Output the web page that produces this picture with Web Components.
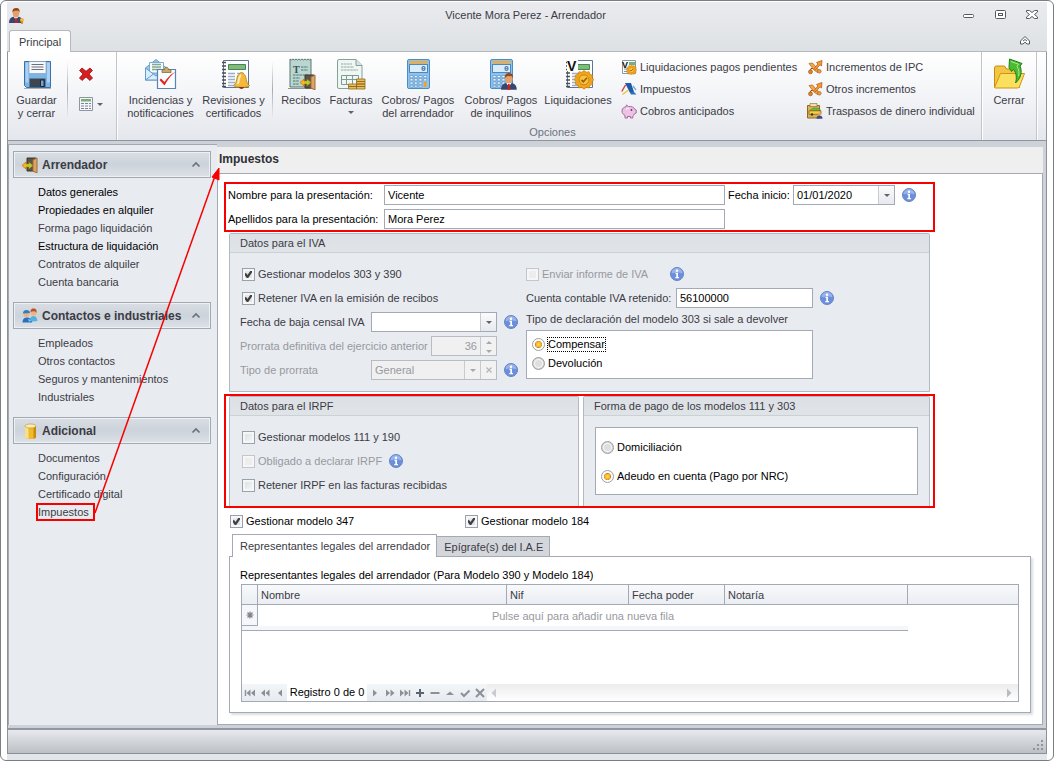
<!DOCTYPE html>
<html lang="es">
<head>
<meta charset="utf-8">
<title>Vicente Mora Perez - Arrendador</title>
<style>
  html, body { margin: 0; }
  body {
    --line: #a3a9b5;
    --ink: #3b3b45;
    --mark: #f80000;
    background: #fff;
    color: var(--ink);
    font: 11px/14px "Liberation Sans", Arial, sans-serif;
  }
</style>
</head>
<body>
<app-window caption="Vicente Mora Perez - Arrendador" tab="Principal">
  <ribbon-bar slot="ribbon"></ribbon-bar>
  <side-nav slot="side"></side-nav>
  <tax-form></tax-form>
</app-window>

<script>
const BASE = `<style>
*,*::before,*::after{box-sizing:border-box}
:host{display:block;box-sizing:border-box}
:host([hidden]){display:none}
button,input,select{font:inherit;color:inherit;margin:0;border-radius:0}
button{background:none;border:0;padding:0}
</style>`;

function define(name, markup, setup) {
  const template = document.createElement('template');
  customElements.define(name, class extends HTMLElement {
    constructor() {
      super();
      template.innerHTML = BASE + (typeof markup === 'function' ? markup(this) : markup);
      this.attachShadow({ mode: 'open' }).append(template.content.cloneNode(true));
      if (setup) setup(this, this.shadowRoot);
    }
  });
}

/* ---------- icon set ---------- */
const person = (x, y, s) => `<g transform="translate(${x} ${y}) scale(${s})">
  <path d="M0 16c0-4 2-6 5-6.500h5c3 .5 5 2.500 5 6.500z" fill="#39476f"/>
  <path d="M5 9.500 7.500 13 10 9.500z" fill="#fff"/><path d="M6.800 10.500h1.500l.7 5.500H6.200z" fill="#cf2020"/>
  <ellipse cx="7.500" cy="5.500" rx="3.600" ry="4.500" fill="#e5a06c"/><path d="M3.700 5C3.300 1.500 5 0 7.600 0s4.300 1.500 3.800 5c-.5-1.500-1-2-2-2.200-2 .6-4.500-.3-5.700 2.200z" fill="#8f4a20"/></g>`;
const door = `<path d="M5 1h9v13H5z" fill="#5a554b" stroke="#3a3630"/><path d="m11 3 4-2v15l-4-2z" fill="#d9a66a" stroke="#a56d33"/><path d="M0 8.500 4 5v2h3V5l4 3.500L7 12v-2H4v2z" fill="#ffb21a" stroke="#b56a00" stroke-width=".6"/><path d="M5.500 7.300h2V6L10 8.500 7.500 11V9.700h-2z" fill="#8fdc3c"/>`;
const calc = `<rect x="5.500" y="1.500" width="22" height="29" rx="1.500" fill="#8fc3ee" stroke="#4a8cc7"/><rect x="7.500" y="3" width="18" height="2.500" fill="#f3a93b"/><rect x="7.500" y="6.500" width="18" height="8" fill="#d8ecfb" stroke="#4d88bb"/><text x="19" y="13" font-size="8" font-family="Liberation Mono" font-weight="bold" fill="#3d6c9c">0</text>
  <g fill="#fdfeff" stroke="#5a93c6" stroke-width=".7"><path d="M8 17.500h3v2.200H8zM12.300 17.500h3v2.200h-3zM17 17.500h3v2.200h-3zM21.700 17.500h3v2.200h-3zM8 20.700h3v2.200H8zM12.300 20.700h3v2.200h-3zM17 20.700h3v2.200h-3zM21.700 20.700h3v2.200h-3zM8 24h3v2.200H8zM12.300 24h3v2.200h-3zM17 24h3v2.200h-3zM8 27.200h3v1.800H8zM12.300 27.200h3v1.800h-3zM17 27.200h3v1.800h-3z"/></g><path d="M21.700 24h3v5h-3z" fill="#f3a32c"/>`;
const seal = (x, y, s) => `<g transform="translate(${x} ${y}) scale(${s})"><path d="m0-10 2.600 2 3.300-.6 1.200 3.100 3.100 1.200L9.600-1l2 1.600-2 2.600.6 3-3.100 1.200-1.200 3.100-3.300-.6L0 12l-2.600-2.100-3.300.6-1.200-3.100-3.100-1.200.6-3-2-2.600 2-2.600-.6-2.300 3.100-1.200 1.200-3.100 3.300.6z" fill="#efa51d" stroke="#c67a0a" stroke-width=".8"/><circle cy="1" r="5.800" fill="#f8c340" stroke="#c67a0a"/><path d="M-3 1-.8 3.300 3.500-1.500" fill="none" stroke="#9b5e05" stroke-width="2"/></g>`;
const notebook = `<path d="M5.500 2.500h25v27h-25z" fill="#fdfefe" stroke="#5d7596"/><path d="M4 4.500h4M4 8h4M4 11.500h4M4 15h4M4 18.500h4M4 22h4M4 25.500h4M4 28.500h4" stroke="#4c4f55" stroke-width="1.300"/><path d="M10.500 6.500h17v5h-17z" fill="#7cbd7c" stroke="#4b8450"/><path d="M10 15.500h7m2 0h7m-16 3h7m2 0h7m-16 3h7m2 0h7m-16 3h7m-7 3h7" stroke="#9badcb" stroke-width="1.300"/>`;
const chart = `<path d="m2.500 13.500 1.500-4h3l1.500-2.500" fill="none" stroke="#7a4a22" stroke-width="1"/><path d="m2 4.500 3.500-.5 6.500 7.500-1.500 2L7 11z" fill="#f6a548" stroke="#b8691d" stroke-width=".8"/><path d="M7 9.500 11 5l-1.500-1.500L15 1.500l-.5 5.500L13 5.800 8.500 11z" fill="#f59a35" stroke="#b8601a" stroke-width=".8"/><circle cx="3.500" cy="12.800" r="2" fill="#e58423" stroke="#8d4d18" stroke-width=".6"/><circle cx="12.300" cy="12.300" r="1.800" fill="#efa04a" stroke="#8d4d18" stroke-width=".6"/>`;

const ICONS = {
  owner: [16, person(0, 0, .93) + '<circle cx="13" cy="12" r="2" fill="#f1b83a"/><path d="M12 13v3h2v-3z" fill="#d8951d"/>'],
  save: [32, '<path d="M3.500 3.500h26v26h-24l-2-2z" fill="#7ab5e8" stroke="#3b6fa8"/><path d="M4.500 4.500h3v20h-3zM26 4.500h3v20h-3z" fill="#a9d2f4"/><path d="M8 3.500h17v12H8z" fill="#f6f8fa" stroke="#8097ae" stroke-width=".6"/><path d="M10.500 6.500h12M10.500 9h12M10.500 11.500h12" stroke="#67707b"/><path d="M8.500 20.500h16v8.500h-16z" fill="#3f4650"/><path d="M19.500 22H23v6.500h-3.500z" fill="#6fa4dd" stroke="#20252d"/><path d="M3 30.500h27" stroke="#a9afb7"/>'],
  remove: [16, '<path d="m1.500 4.500 2.500-2.500L8 5.300 12 2l2.500 2.500L11 8l3.500 4-2.500 2.500L8 10.900 4 14.500 1.500 12 5 8z" fill="#d81e1e" stroke="#971010" stroke-width=".8"/>'],
  list: [16, '<path d="M1.500 1.500h13v13h-13z" fill="#f4f6f7" stroke="#8f979e"/><path d="M3 3h10v2.500H3z" fill="#79b07a"/><path d="M3 7.500h3m1 0h3m1 0h2m-10 2.500h3m1 0h3m1 0h2m-10 2.500h3m1 0h3m1 0h2" stroke="#7486a3"/>'],
  incidents: [32, '<path d="M.5 10 11 1.500 21.500 10v12H.5z" fill="#9cc7e8" stroke="#5f9ccb"/><path d="M4.500 4.500h14V15h-14z" fill="#f7fafc" stroke="#7babce"/><path d="M7 6.500h9M7 9h9M7 11.500h9" stroke="#84a98d" stroke-width="1.400"/><path d="m.5 10 10.500 8 10.500-8v12H.5z" fill="#d9edfa" stroke="#5f9ccb"/><path d="m.5 22 8-6" stroke="#5f9ccb"/><path d="M12.500 11.500h18v19h-18z" fill="#fafcff" stroke="#5b83b5" stroke-width="1.200"/><path d="M17 14.500v-3h2.500c0-3 4-3 4 0H26v3z" fill="#c6a86a" stroke="#7a6233" stroke-width=".7"/><path d="m14.500 22 5 5.500C23 21.500 26 17 31 13.500c-6 3-8.500 6.500-11.500 10.500L16 20.500z" fill="#e3261d"/>'],
  reviews: [32, notebook + '<path d="M15.500 27.500c4.500-3 2-9.500 6-11.500.5-1 1-1.500 2-1.500s1.500.5 2 1.500c4 2 1.500 8.500 6 11.500-.5 2.500-15.500 2.500-16 0z" fill="#f4b93a" stroke="#b97b0c" stroke-width=".8"/><path d="M19.500 26c2-2.500.8-7.500 3.500-9" stroke="#fdf0b8" stroke-width="2" fill="none"/><path d="M21 29h5c0 2.500-5 2.500-5 0z" fill="#8b2f1c"/>'],
  receipts: [32, '<path d="m5 1 1.500 1L8 1l1.500 1L11 1l1.500 1L14 1l1.500 1L17 1l1.500 1L20 1l1.500 1L23 1l1.500 1L26 1v28H5z" fill="#b9d6d0" stroke="#5b7672"/><text x="8" y="15" font-size="10" font-weight="bold" font-family="Liberation Serif" fill="#35524e">T</text><path d="M16 9h7m-7 3h7m-15 5h15m-15 3h7m-7 3h6m-6 3h6" stroke="#54736e" stroke-dasharray="2.500 .7"/><path d="M3 30.500h25" stroke="#8a9490"/><g transform="translate(15 16)">' + door + '</g>'],
  invoices: [32, '<path d="M2.500 3q0-1.500 1.500-1.500h17l6 6V29q0 1.500-1.500 1.500H4q-1.500 0-1.500-1.500z" fill="#f0f6f3" stroke="#86a199"/><path d="M21 1.500v6h6" fill="#d5e4de" stroke="#86a199"/><path d="M6 6h11M6 9h13M6 12h17" stroke="#8eaaa2" stroke-dasharray="2.500 .6"/><path d="M6.500 17.500h17v9h-17zM11.500 17.500v9m6-9v9m-11-5h17" fill="none" stroke="#7e9b93"/><g fill="#e6bc5c" stroke="#93691a" stroke-width=".8"><path d="M13.500 28.500h8V31h-8zM13.500 26h8v2.500h-8zM21.500 28.500H30V31h-8.500zM21.500 26H30v2.500h-8.500zM21.500 23.500H30V26h-8.500zM21.500 21H30v2.500h-8.500z"/></g>'],
  calc: [32, calc],
  calcPerson: [32, calc + person(16, 15, 1.050)],
  settle: [32, notebook + '<path d="M5 1h11v12H5z" fill="#fff"/><text x="5" y="13" font-size="14" font-weight="bold" font-family="Liberation Sans" fill="#111">V</text>' + seal(22, 21, .85)],
  settleSmall: [16, '<path d="M1.500 1.500h13v13h-13z" fill="#fbfcfd" stroke="#8d97a3"/><path d="M8 3h6v3H8z" fill="#79b07a"/><path d="M3 10h4m-4 2.500h4" stroke="#8295b2"/><text x="1" y="9" font-size="9" font-weight="bold" font-family="Liberation Sans" fill="#111">V</text>' + seal(10.500, 10.500, .46)],
  tax: [16, '<path d="M4 2h6l3 9H8.500z" fill="#215ba8"/><path d="M8.500 11H13l2.500 2.500H10z" fill="#2f70bd"/><path d="M.8 10.500 4.500 4" stroke="#d8433a" stroke-width="1.500"/><path d="m1.500 13.500 6-4.500" stroke="#e6c83a" stroke-width="1.500"/><path d="m12 5 3 4" stroke="#6fa8dc" stroke-width="1.300"/>'],
  piggy: [16, '<path d="M1 8c0-3 2.500-4 4-4.200L5.500 2l2 1.500c3-.3 5.500.8 6.200 2.700l1.500.8v3l-1.700.8c-.4 1-1 1.700-1.700 2.200v2H9.500v-1.500h-3V15H4v-2.500C2 11.500 1 10 1 8z" fill="#ecc3e3" stroke="#a56a9d"/><circle cx="10.500" cy="7" r=".9" fill="#6c3264"/><path d="M5 6.500c.8-1 2-1.200 3-1" stroke="#fff" fill="none"/>'],
  chart: [16, chart],
  transfer: [16, '<path d="M.5 2.500h12V15H.5z" fill="#d8b25a" stroke="#8c6a22"/><path d="M3 .5h7v3H3z" fill="#efe0a8" stroke="#8c6a22" stroke-width=".6"/><path d="M3 7.500 6 5h5l3 2.500z" fill="#6fb64a" stroke="#41802a" stroke-width=".5"/><path d="M2 7.800h12v3.500H2z" fill="#f5cf3f" stroke="#7b5a17" stroke-width=".7"/><circle cx="5" cy="11.500" r="1.200" fill="#333"/><path d="M9.500 15.800c0-2.500 1-3.300 3-3.300s3 .8 3 3.300z" fill="#3f4a86"/><circle cx="12.500" cy="11" r="1.600" fill="#e5a06c"/>'],
  folder: [32, '<path d="M1.500 29.500V10q0-2 2-2h8l2 3h11q2 0 2 2v16.500z" fill="#f3c544" stroke="#c98b0d"/><path d="m1.500 29.500 6-14h24l-5 13q-.4 1.500-2 1.500H3q-1.500 0-1.500-.5z" fill="#fbe060" stroke="#cf950f"/><path d="M16 9.500 16.500 1 29 5.500l-2 2.500c2.500 6 1 12-4.500 17 1.500-5 1-10-2-13.500l-2 2z" fill="#4dbb32" stroke="#1f8013"/><path d="m18 3.500 7.500 2.700-1.500 2c2 3.500 2.500 7 1.500 10" fill="none" stroke="#a9ea8d"/>'],
  landlord: [16, door],
  contacts: [16, '<circle cx="11.500" cy="4.500" r="3" fill="#f0b27f"/><path d="M8.500 4c0-3 1.500-3.500 3.500-3.500S15 2 14.500 5c-1-2-3-2-6-1z" fill="#b0552a"/><path d="M7.500 14c0-4 2-6 4-6s4 2 4 5z" fill="#58b1dd"/><circle cx="4.500" cy="6" r="3" fill="#f0b27f"/><path d="M1 5.500C1 3 2.500 2 4.500 2S8 3 8 5z" fill="#2a7fc6"/><path d="M.5 14.500C.5 11 2 9.500 5 9.500s4.500 2 5 5z" fill="#2871bd"/><path d="m6 11 4 1-3 2z" fill="#7cc6ee"/>'],
  barrel: [16, '<path d="M3 3h11v11c0 1.500-2.500 2-5.500 2S3 15.500 3 14z" fill="#efbb2c"/><path d="M3 3h3.500v12.800C4.500 15.500 3 15 3 14z" fill="#f8e08a"/><path d="M11.500 3H14v11c0 .8-1 1.400-2.500 1.700z" fill="#c98a15"/><ellipse cx="8.500" cy="3" rx="5.500" ry="2" fill="#fbeeb4" stroke="#c08a1c" stroke-width=".6"/>'],
  info: [14, '<circle cx="7" cy="7" r="6.500" fill="#6c8fdb" stroke="#6485c6"/><path d="M1.500 6.500a5.500 5.500 0 0 1 11 0C10 5 5 5 1.500 6.500z" fill="#98b3ea"/><circle cx="7" cy="3.700" r="1.200" fill="#fff"/><path d="M5.500 5.700H8v4.300h1v1.200H5.300V10h1V6.900h-.8z" fill="#fff"/>'],
  chevron: [16, '<path d="M4.500 9.500 8 6l3.500 3.500" fill="none" stroke="#6d7078" stroke-width="1.600"/>'],
  collapse: [16, '<path d="M3.500 8 8 3.500 12.500 8v3H10L8 9.200 6 11H3.500V8zM6 8l2-1.500L10 8" fill="#fff" stroke="#55585f"/>'],
  minimize: [16, '<rect x="3.500" y="6.500" width="10" height="3" rx="1" fill="#fff" stroke="#55585f"/>'],
  maximize: [16, '<rect x="3.500" y="2.500" width="10" height="8" rx="1" fill="#fff" stroke="#55585f"/><rect x="6.500" y="5.500" width="4" height="2" fill="none" stroke="#55585f"/>'],
  close: [16, '<path d="M2.500 2.500h3l2.500 2 2.500-2h3V4L10.500 6.500l3 2.500v1.500h-3L8 8.500l-2.500 2h-3V9l3-2.500-3-2.500z" fill="#fff" stroke="#55585f"/>'],
  down: [8, '<path d="M1 3h6L4 6z" fill="#5f636c"/>'],
  up: [8, '<path d="M1 6h6L4 3z" fill="#a8a8a8"/>'],
  downOff: [8, '<path d="M1 3h6L4 6z" fill="#a8a8a8"/>'],
  cross: [8, '<path d="m1.500 1.500 5 5m0-5-5 5" stroke="#b4b4b4" stroke-width="1.200"/>'],
  newRow: [10, '<path d="M5 1.500v7M1.500 5h7M2.500 2.500l5 5M7.500 2.500l-5 5" stroke="#7d828b" stroke-width="1.200"/>'],
  first: [12, '<path d="M1.500 3v6" stroke="#8d9097" stroke-width="1.400"/><path d="M6.500 2.500v7L2.500 6zM11 2.500v7L7 6z" fill="#8d9097"/>'],
  prevPage: [12, '<path d="M6 2.500v7L2 6zM10.500 2.500v7L6.500 6z" fill="#8d9097"/>'],
  prev: [12, '<path d="M8 2.500v7L4 6z" fill="#8d9097"/>'],
  next: [12, '<path d="M4 2.500v7L8 6z" fill="#8d9097"/>'],
  nextPage: [12, '<path d="M2 2.500v7L6 6zM6.500 2.500v7l4-3.500z" fill="#8d9097"/>'],
  last: [12, '<path d="M10.500 3v6" stroke="#8d9097" stroke-width="1.400"/><path d="M1 2.500v7L5 6zM5.500 2.500v7l4-3.500z" fill="#8d9097"/>'],
  plus: [12, '<path d="M6 2v8M2 6h8" stroke="#5c6370" stroke-width="2"/>'],
  minus: [12, '<path d="M1.500 6h9" stroke="#8d9097" stroke-width="2"/>'],
  edit: [12, '<path d="M2 8h8L6 4.500z" fill="#8d9097"/>'],
  accept: [12, '<path d="m2 6 3 3 5.500-5.500" fill="none" stroke="#8d9097" stroke-width="2"/>'],
  cancel: [12, '<path d="m2 2 8 8m0-8-8 8" stroke="#8d9097" stroke-width="2"/>'],
  scrollLeft: [12, '<path d="M8 1.500v9L3.500 6z" fill="#c9cbce"/>'],
  scrollRight: [12, '<path d="M4 1.500v9L8.500 6z" fill="#b9bbbf"/>'],
  grip: [12, '<g fill="#8f959d"><path d="M9 1h2v2H9zM9 5h2v2H9zM5 5h2v2H5zM9 9h2v2H9zM5 9h2v2H5zM1 9h2v2H1z"/></g>']
};
const icon = name => `<ui-icon name="${name}"></ui-icon>`;

define('ui-icon', host => {
  const [size, art] = ICONS[host.getAttribute('name')];
  return `<style>:host{display:inline-block;flex:none;width:${size}px;height:${size}px}svg{display:block}</style>
  <svg width="${size}" height="${size}" viewBox="0 0 ${size} ${size}" aria-hidden="true">${art}</svg>`;
});

/* ---------- form controls ---------- */
define('check-field', host => `<style>
:host{display:inline-flex}
label{display:flex;align-items:center;gap:3px;height:14px;white-space:nowrap}
input{appearance:none;width:13px;height:13px;flex:none;border:1px solid #9ba1ac;background:linear-gradient(135deg,#d9dbde,#fafafa);box-shadow:inset 0 0 0 2px #f5f6f7}
input:checked{background:url('data:image/svg+xml,<svg xmlns="http://www.w3.org/2000/svg" width="11" height="11"><path d="M2 4.500 4.500 8l4.500-6.500" fill="none" stroke="%23404040" stroke-width="2.200"/></svg>') no-repeat,linear-gradient(#ececec,#e0e1e3)}
:host([disabled]){color:#97999e}
:host([disabled]) input{border-color:#c3c6cb;background:#ededed}
</style><label><input type="checkbox" ${host.hasAttribute('checked') ? 'checked' : ''} ${host.hasAttribute('disabled') ? 'disabled' : ''}><slot></slot></label>`);

define('radio-list', host => {
  const options = host.getAttribute('options').split('|');
  const chosen = Number(host.getAttribute('selected'));
  return `<style>
:host{display:flex;flex-direction:column;border:1px solid var(--line);background:#fff;color:#000;padding:0 5px}
label{display:flex;align-items:center;gap:3px;height:14px}
input{appearance:none;width:13px;height:13px;flex:none;border-radius:50%;border:1px solid #9b9da3;background:radial-gradient(#dedede 3px,#f6f6f6 4px,#d6d6d6 5px)}
input:checked{background:radial-gradient(circle at 50% 50%,#ffe14a 0,#f6a81c 3px,#c78017 3px,#fff 4px)}
span{height:13px;line-height:13px}
:host([focused]) input:checked+span{outline:1px dotted #000}
</style>` + options.map((text, i) =>
    `<label><input type="radio" name="choice" ${i === chosen ? 'checked' : ''}><span>${text}</span></label>`).join('');
});

define('text-field', host => {
  const kind = host.getAttribute('kind') || 'text';
  const off = host.hasAttribute('disabled') ? 'disabled' : '';
  const value = host.getAttribute('value') || '';
  const label = host.getAttribute('label');
  let control = kind === 'select'
    ? `<select id="c" ${off}><option>${value}</option></select>`
    : `<input id="c" type="text" value="${value}" ${off}>`;
  if (kind === 'date') control += `<button aria-label="Abrir calendario">${icon('down')}</button>`;
  if (kind === 'select') control += `<button ${off} aria-label="Desplegar">${icon('downOff')}</button><button ${off} aria-label="Borrar">${icon('cross')}</button>`;
  if (kind === 'spin') control += `<div class="spin"><button ${off} aria-label="Subir">${icon('up')}</button><button ${off} aria-label="Bajar">${icon('downOff')}</button></div>`;
  return `<style>
:host{display:flex;align-items:center;height:20px}
label{white-space:nowrap;flex:none;width:var(--label,auto)}
.box{display:flex;flex:1;min-width:0;height:20px;border:1px solid var(--line);background:#fff;color:#000}
input,select{appearance:none;border:0;background:none;flex:1;min-width:0;padding:0 3px;outline:0;height:18px;opacity:1}
button{width:16px;border-left:1px solid #c6cad1;background:linear-gradient(#fafbfc,#e6e9ee);display:flex;align-items:center;justify-content:center}
.spin{display:flex;flex-direction:column}
.spin button{height:9px}
:host([disabled]){color:#97999e}
:host([disabled]) .box{color:#97999e;background:#f0f0f0;border-color:#b7bbc3}
:host([disabled]) button{background:#f2f2f2}
:host([kind=spin]) input{text-align:right;padding-right:3px}
</style><label for="c">${label}</label><div class="box">${control}</div>`;
});

define('group-panel', host => `<style>
:host{display:flex;flex-direction:column;border:1px solid #b3b8c1;border-radius:2px 2px 0 0;background:#e8ebf0}
h3{margin:0;height:19px;padding:0 10px;font:inherit;line-height:18px;background:linear-gradient(#dde0e5,#dfe4e7);border-bottom:1px solid #cdd1d7}
</style><h3>${host.getAttribute('caption')}</h3><slot></slot>`);

/* ---------- window ---------- */
define('app-window', host => `<style>
:host{position:relative;display:flex;flex-direction:column;min-height:100vh;border:1px solid #797d86;border-radius:6px;background:#fff;padding:1px 6px 0}
header{background:linear-gradient(#e9ebee,#dee1e4)}
.title{display:grid;grid-template-columns:100px 1fr 100px;align-items:center;height:28px}
h1{margin:0;font:inherit;line-height:14px;text-align:center;grid-column:2;padding:0 3px 2px 0}
.title>ui-icon{margin-left:2px}
.controls{display:flex;gap:16px;grid-column:3;justify-content:flex-end;padding-right:7px}
.tabs{display:flex;align-items:flex-end;justify-content:space-between;height:22px;border-bottom:1px solid #b4b8be;padding:0 14px 0 2px}
.tabs .tab{height:22px;margin-bottom:-1px;padding:0 9px;border:1px solid #b4b8be;border-bottom:0;border-radius:3px 3px 0 0;background:#fff}
.tabs .fold{align-self:center}
.body{flex:1;display:grid;grid-template-columns:209px minmax(0,1fr);border:solid #8b909a;border-width:0 1px;background:#cdd2d9;padding:3px 3px 3px 0}
.body ::slotted([slot=side]){background:#e8ebf0;border:solid #a3a8b1;border-width:1px 0 0 1px}
footer{height:26px;border:1px solid #8b909a;border-top:2px solid #9397a1;background:linear-gradient(#e7e9ee,#bcc0c5);display:flex;justify-content:flex-end;align-items:flex-end;padding:0 2px 2px}
.rim{height:6px;background:#e2e6e9}
.controls button,.fold{display:flex}
svg.arrow{position:absolute;left:93px;top:166px;pointer-events:none}
</style>
<header><div class="title">${icon('owner')}<h1>${host.getAttribute('caption')}</h1>
<div class="controls"><button aria-label="Minimizar">${icon('minimize')}</button><button aria-label="Maximizar">${icon('maximize')}</button><button aria-label="Cerrar ventana">${icon('close')}</button></div></div>
<div class="tabs"><button class="tab">${host.getAttribute('tab')}</button><button class="fold" aria-label="Contraer cinta">${icon('collapse')}</button></div></header>
<slot name="ribbon"></slot>
<div class="body"><slot name="side"></slot><slot></slot></div>
<footer>${icon('grip')}</footer><div class="rim"></div>
<svg class="arrow" width="130" height="350" aria-hidden="true"><path d="M1 346 121 9" stroke="#f80000" stroke-width="1.500"/><path d="M125 1v12l-7-3z" fill="#f80000" stroke="#f80000"/></svg>`);

/* ---------- ribbon ---------- */
define('ribbon-button', host => `<style>
:host{flex:none;width:var(--w,72px)}
button{display:flex;flex-direction:column;align-items:center;gap:4px;width:100%;line-height:13px;text-align:center;white-space:nowrap}
.menu{height:6px;margin-top:-5px}
</style><button>${icon(host.getAttribute('icon'))}<span><slot></slot></span>${host.hasAttribute('menu') ? `<span class="menu">${icon('down')}</span>` : ''}</button>`);

define('ribbon-link', host => `<style>
button{display:flex;align-items:center;gap:3px;height:16px;white-space:nowrap}
</style><button>${icon(host.getAttribute('icon'))}<slot></slot></button>`);

define('ribbon-bar', `<style>
:host{display:flex;height:89px;background:linear-gradient(#fff,#f3f4f7 50%,#e4e7ec);border:1px solid #9094a0;border-top:0;white-space:nowrap}
.group{display:flex;flex-direction:column;justify-content:space-between;border-right:1px solid #c1c5cb;box-shadow:1px 0 #fff;padding:6px 0 1px}
.row{display:flex;align-items:flex-start}
.sep{width:1px;height:58px;margin:3px 3px 0 2px;background:linear-gradient(#fff0,#a7abb3,#fff0)}
.small{display:flex;flex-direction:column;gap:14px;padding:8px 0 0 7px;width:45px}
.small button{display:flex;align-items:center;gap:2px}
.links{display:flex;flex-direction:column;gap:6px;padding-top:1px}
.links.first{width:193px;padding-left:7px}
.caption{text-align:center;color:#6d7280}
.main{flex:0 1 auto;padding-left:7px;width:865px}
</style>
<div class="group"><div class="row">
<ribbon-button icon="save" style="--w:57px">Guardar<br>y cerrar</ribbon-button><div class="sep"></div>
<div class="small"><button aria-label="Eliminar">${icon('remove')}</button><button aria-label="Vistas">${icon('list')}${icon('down')}</button></div>
</div></div>
<div class="group main"><div class="row">
<ribbon-button icon="incidents" style="--w:73px">Incidencias y<br>notificaciones</ribbon-button>
<ribbon-button icon="reviews" style="--w:73px">Revisiones y<br>certificados</ribbon-button><div class="sep"></div>
<ribbon-button icon="receipts" style="--w:50px">Recibos</ribbon-button>
<ribbon-button icon="invoices" menu style="--w:50px">Facturas</ribbon-button>
<ribbon-button icon="calc" style="--w:84px">Cobros/ Pagos<br>del arrendador</ribbon-button>
<ribbon-button icon="calcPerson" style="--w:82px">Cobros/ Pagos<br>de inquilinos</ribbon-button>
<ribbon-button icon="settle">Liquidaciones</ribbon-button>
<div class="links first">
<ribbon-link icon="settleSmall">Liquidaciones pagos pendientes</ribbon-link><ribbon-link icon="tax">Impuestos</ribbon-link><ribbon-link icon="piggy">Cobros anticipados</ribbon-link></div>
<div class="links"><ribbon-link icon="chart">Incrementos de IPC</ribbon-link><ribbon-link icon="chart">Otros incrementos</ribbon-link><ribbon-link icon="transfer">Traspasos de dinero individual</ribbon-link></div>
</div><div class="caption">Opciones</div></div>
<div class="group"><ribbon-button icon="folder" style="--w:54px">Cerrar</ribbon-button></div>`);

/* ---------- navigation ---------- */
define('nav-group', host => `<style>
:host{margin-bottom:11px}
button{display:flex;align-items:center;gap:4px;width:100%;height:27px;padding:0 6px 0 8px;border:1px solid #a3a9b3;box-shadow:inset 0 0 0 1px #eef1f4;background:linear-gradient(#d9dee4,#ccd3da 50%,#dde1e7);font-size:12px;font-weight:bold;text-align:left;white-space:nowrap}
button span{flex:1}
nav{display:flex;flex-direction:column;padding-top:5px}
</style><button aria-expanded="true">${icon(host.getAttribute('icon'))}<span>${host.getAttribute('caption')}</span>${icon('chevron')}</button><nav><slot></slot></nav>`);

define('nav-link', `<style>
:host{display:flex;height:18px;padding-left:23px;align-items:center}
a{color:inherit;text-decoration:none;border:2px solid transparent;line-height:14px;white-space:nowrap}
:host([strong]){color:#000}
:host([marked]) a{border-color:var(--mark);padding-right:4px}
</style><a href="#"><slot></slot></a>`);

define('side-nav', `<style>:host{padding:6px 6px 0 4px}</style>
<nav-group icon="landlord" caption="Arrendador"><nav-link strong>Datos generales</nav-link><nav-link strong>Propiedades en alquiler</nav-link><nav-link>Forma pago liquidación</nav-link><nav-link strong>Estructura de liquidación</nav-link><nav-link>Contratos de alquiler</nav-link><nav-link>Cuenta bancaria</nav-link></nav-group>
<nav-group icon="contacts" caption="Contactos e industriales"><nav-link>Empleados</nav-link><nav-link>Otros contactos</nav-link><nav-link>Seguros y mantenimientos</nav-link><nav-link>Industriales</nav-link></nav-group>
<nav-group icon="barrel" caption="Adicional"><nav-link>Documentos</nav-link><nav-link>Configuración</nav-link><nav-link>Certificado digital</nav-link><nav-link marked>Impuestos</nav-link></nav-group>`);

/* ---------- representatives grid ---------- */
define('record-grid', `<style>
:host{display:flex;flex-direction:column;border:1px solid var(--line);background:#fff;min-height:118px}
.data{flex:1}
table{border-collapse:separate;border-spacing:0;table-layout:fixed;width:100%}
th{height:20px;padding:0 3px;font-weight:normal;text-align:left;background:linear-gradient(#f8f9fb,#eaedf2);border:solid var(--line);border-width:0 1px 1px 0}
th:last-child{border-right:0}
td{padding:0}
td.mark{border:solid var(--line);border-width:0 1px 1px 0;background:#f5f7fa}
td.mark ui-icon{display:block;margin:0 auto}
td.new{height:21px;text-align:center;color:#97999e}
td.edge{height:5px;background:#f4f6f9;border-bottom:1px solid var(--line)}
.nav{display:flex;align-items:center;height:17px;background:linear-gradient(#f3f6f9,#e7eaee)}
.nav button{width:15px;display:flex;justify-content:center}
.nav output{background:#fff;color:#000;padding:0 2px;line-height:17px;width:80px;white-space:nowrap;text-align:center}
.scroll{flex:1;height:17px;display:flex;align-items:center;justify-content:space-between;background:linear-gradient(#ececec,#fff);padding:0 3px 0 1px}
</style>
<div class="data"><table><colgroup><col style="width:16px"><col style="width:249px"><col style="width:122px"><col style="width:96px"><col style="width:183px"><col></colgroup>
<thead><tr><th></th><th>Nombre</th><th>Nif</th><th>Fecha poder</th><th>Notaría</th><th></th></tr></thead>
<tbody><tr><td class="mark">${icon('newRow')}</td><td class="new" colspan="4">Pulse aquí para añadir una nueva fila</td><td></td></tr>
<tr><td class="edge" colspan="5"></td><td></td></tr></tbody></table></div>
<div class="nav"><button aria-label="Primero">${icon('first')}</button><button aria-label="Página anterior">${icon('prevPage')}</button><button aria-label="Anterior">${icon('prev')}</button><output>Registro 0 de 0</output><button aria-label="Siguiente">${icon('next')}</button><button aria-label="Página siguiente">${icon('nextPage')}</button><button aria-label="Último">${icon('last')}</button><button aria-label="Añadir">${icon('plus')}</button><button aria-label="Quitar">${icon('minus')}</button><button aria-label="Editar">${icon('edit')}</button><button aria-label="Aceptar">${icon('accept')}</button><button aria-label="Cancelar">${icon('cancel')}</button>
<div class="scroll">${icon('scrollLeft')}${icon('scrollRight')}</div></div>`);

/* ---------- tax form ---------- */
define('tax-form', `<style>
:host{display:flex;flex-direction:column;min-width:0;padding-top:3px}
h2{margin:0;height:26px;padding:0 2px;font-size:12px;font-weight:bold;line-height:24px;background:#efefef;color:#303036}
.page{flex:1;display:flex;flex-direction:column;border:1px solid var(--line);background:#fff;padding:8px 11px 11px 6px}
.frame{border:2px solid var(--mark);width:711px;max-width:100%}
.names{display:grid;grid-template-columns:497px auto 16px;gap:4px 3px;padding:1px 0 1px 2px;color:#000;justify-content:start;align-items:center}
.names text-field{--label:156px}
.names .start{--label:65px;width:167px;margin-right:4px}
.iva{margin:1px 0 0 5px;width:701px;min-height:159px}
.cols{display:grid;grid-template-columns:286px 287px 20px;padding:11px 0 10px 10px}
.rows{display:flex;flex-direction:column;gap:4px}
.row{display:flex;align-items:center;gap:7px;height:20px}
.row.check{padding-left:2px}
.rows text-field{width:257px;--label:131px}
.rows .spin{--label:191px}
.right{display:flex;flex-direction:column}
.right text-field{--label:150px;width:287px;margin:4px 0}
.right radio-list{height:49px;padding-top:6px;gap:5px;margin-top:4px}
.side{display:flex;flex-direction:column;padding:27px 0 0 7px}
.right .row{gap:22px}
.pair{display:grid;grid-template-columns:350px 1fr;gap:4px;padding:0 3px;margin-top:2px;height:114px;overflow:hidden}
.pair group-panel{border-bottom:0}
.pair .rows{padding:11px 0 0 10px}
.pair radio-list{margin:11px;height:68px;gap:15px;padding-top:12px}
.checks{display:grid;grid-template-columns:235px auto;justify-content:start;padding-left:6px;margin-top:6px;color:#000}
.tabs{display:flex;align-items:flex-end;margin:6px 0 0 8px;height:22px}
.tabs button{height:20px;padding:0 6px 0 7px;border:1px solid var(--line);border-bottom:0;border-left:0;background:#d3d7dc;white-space:nowrap}
.tabs button.on{height:23px;margin-bottom:-1px;border-left:1px solid var(--line);background:#fff;z-index:1}
.sheet{flex:1;display:flex;flex-direction:column;margin-left:5px;border:1px solid var(--line);box-shadow:2px 2px 2px #dcdfe3;padding:11px 11px 10px;color:#000}
.sheet p{margin:0 -1px 2px}
record-grid{flex:1;color:var(--ink)}
</style>
<h2>Impuestos</h2>
<div class="page">
<div class="frame names">
<text-field label="Nombre para la presentación:" value="Vicente"></text-field><text-field class="start" kind="date" label="Fecha inicio:" value="01/01/2020"></text-field>${icon('info')}
<text-field label="Apellidos para la presentación:" value="Mora Perez"></text-field>
</div>
<group-panel class="iva" caption="Datos para el IVA"><div class="cols">
<div class="rows"><div class="row check"><check-field checked>Gestionar modelos 303 y 390</check-field></div>
<div class="row check"><check-field checked>Retener IVA en la emisión de recibos</check-field></div>
<div class="row"><text-field kind="date" label="Fecha de baja censal IVA"></text-field>${icon('info')}</div>
<div class="row"><text-field class="spin" kind="spin" disabled label="Prorrata definitiva del ejercicio anterior" value="36"></text-field></div>
<div class="row"><text-field kind="select" disabled label="Tipo de prorrata" value="General"></text-field>${icon('info')}</div></div>
<div class="right"><div class="row"><check-field disabled>Enviar informe de IVA</check-field>${icon('info')}</div>
<text-field label="Cuenta contable IVA retenido:" value="56100000"></text-field>
<div>Tipo de declaración del modelo 303 si sale a devolver</div>
<radio-list options="Compensar|Devolución" selected="0" focused></radio-list></div>
<div class="side">${icon('info')}</div>
</div></group-panel>
<div class="frame pair">
<group-panel caption="Datos para el IRPF"><div class="rows">
<div class="row check"><check-field>Gestionar modelos 111 y 190</check-field></div>
<div class="row check"><check-field disabled>Obligado a declarar IRPF</check-field>${icon('info')}</div>
<div class="row check"><check-field>Retener IRPF en las facturas recibidas</check-field></div></div></group-panel>
<group-panel caption="Forma de pago de los modelos 111 y 303"><radio-list options="Domiciliación|Adeudo en cuenta (Pago por NRC)" selected="1"></radio-list></group-panel>
</div>
<div class="checks"><check-field checked>Gestionar modelo 347</check-field><check-field checked>Gestionar modelo 184</check-field></div>
<div class="tabs"><button class="on">Representantes legales del arrendador</button><button>Epígrafe(s) del I.A.E</button></div>
<div class="sheet"><p>Representantes legales del arrendador (Para Modelo 390 y Modelo 184)</p><record-grid></record-grid></div>
</div>`);
</script>
</body>
</html>
